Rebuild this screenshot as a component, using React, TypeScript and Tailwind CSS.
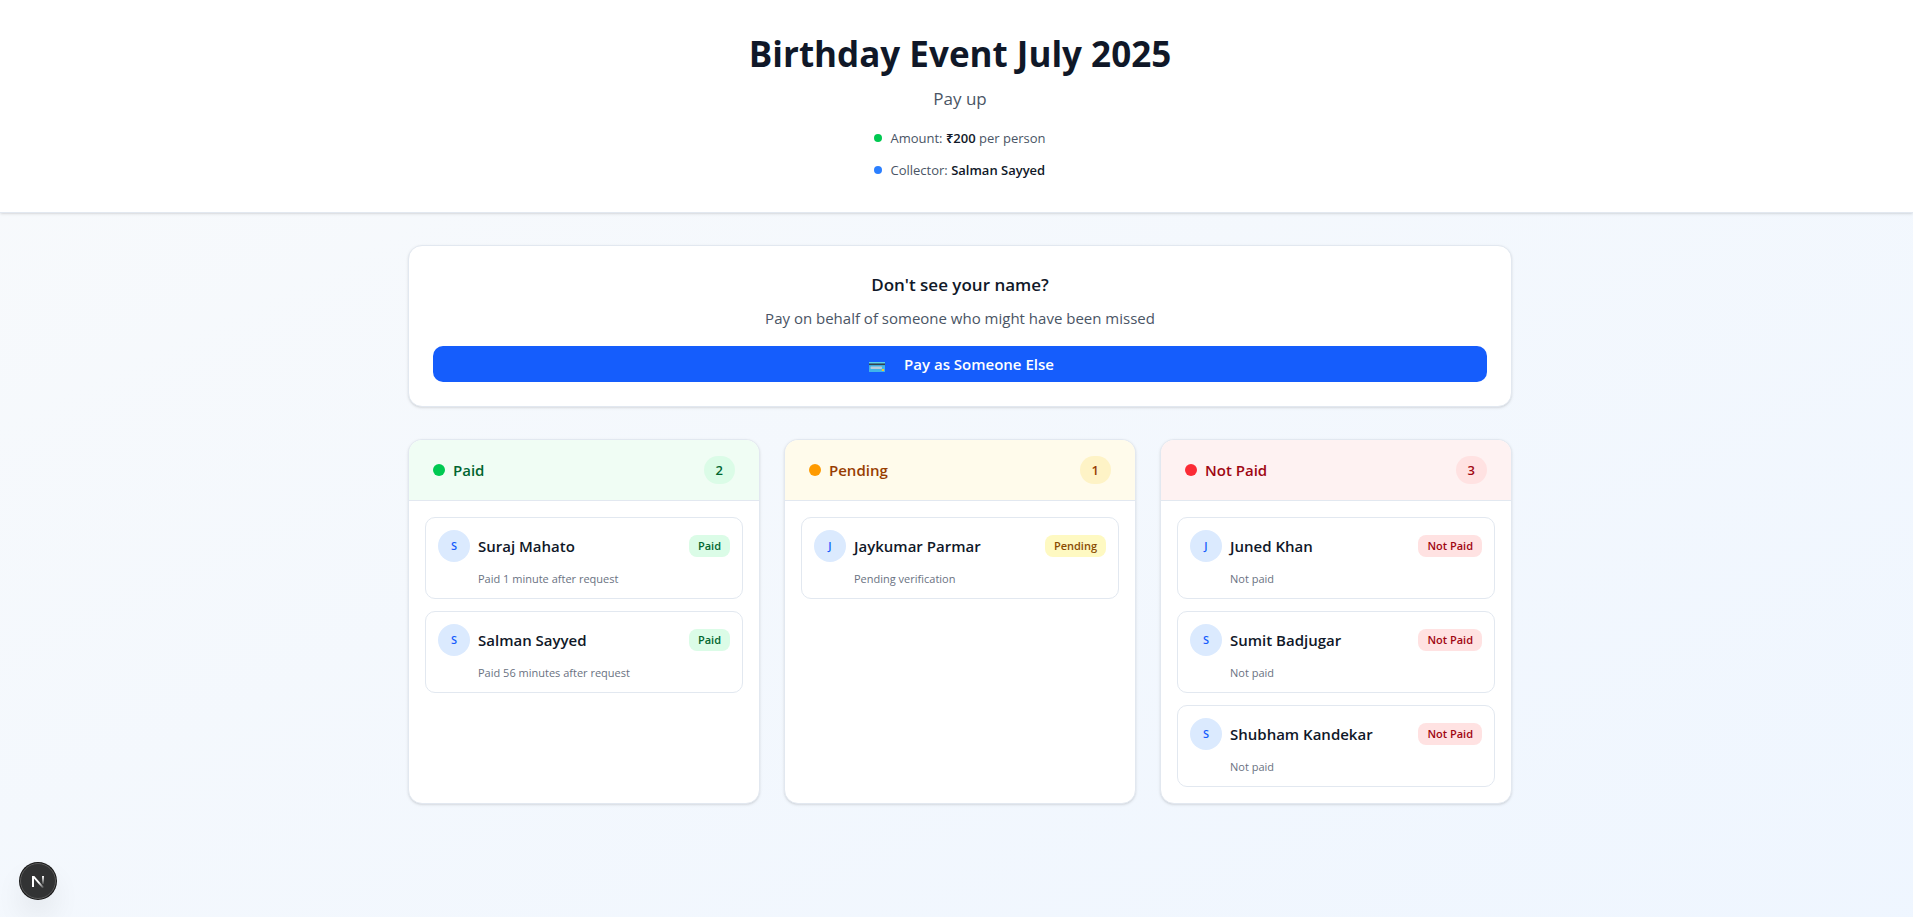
import React from "react";

type Person = { name: string; note: string };

type Column = {
  title: string;
  people: Person[];
  header: string;
  dot: string;
  label: string;
  count: string;
  badge: string;
};

const columns: Column[] = [
  {
    title: "Paid",
    people: [
      { name: "Suraj Mahato", note: "Paid 1 minute after request" },
      { name: "Salman Sayyed", note: "Paid 56 minutes after request" },
    ],
    header: "bg-green-50",
    dot: "bg-green-500",
    label: "text-green-800",
    count: "bg-green-100 text-green-800",
    badge: "bg-green-100 text-green-800",
  },
  {
    title: "Pending",
    people: [{ name: "Jaykumar Parmar", note: "Pending verification" }],
    header: "bg-amber-50",
    dot: "bg-amber-500",
    label: "text-amber-800",
    count: "bg-amber-100 text-amber-800",
    badge: "bg-yellow-100 text-yellow-800",
  },
  {
    title: "Not Paid",
    people: [
      { name: "Juned Khan", note: "Not paid" },
      { name: "Sumit Badjugar", note: "Not paid" },
      { name: "Shubham Kandekar", note: "Not paid" },
    ],
    header: "bg-red-50",
    dot: "bg-red-500",
    label: "text-red-800",
    count: "bg-red-100 text-red-800",
    badge: "bg-red-100 text-red-800",
  },
];

function CardIcon() {
  return (
    <svg width="22" height="16" viewBox="0 0 22 16" aria-hidden="true">
      <rect x="3" y="6" width="16" height="10" rx="0.5" fill="#3fb5ea" />
      <rect x="3" y="6" width="16" height="1.4" fill="#5fd0e4" />
      <rect x="3" y="7.5" width="16" height="1.6" fill="#35424f" />
      <rect x="4.5" y="10.6" width="11.5" height="2.4" rx="0.8" fill="#b9cbdc" />
      <rect x="15.8" y="13" width="2.2" height="2" fill="#f5c02c" />
    </svg>
  );
}

function PersonCard({ person, column }: { person: Person; column: Column }) {
  return (
    <li className="rounded-[10px] border border-slate-200 bg-white px-3 pt-3 pb-[11px]">
      <div className="flex items-center justify-between">
        <div className="flex items-center gap-2">
          <span className="flex size-8 items-center justify-center rounded-full bg-blue-100 text-[11px] leading-4 font-semibold text-blue-600">
            {person.name[0]}
          </span>
          <span className="text-[15px] leading-6 font-semibold text-gray-900">{person.name}</span>
        </div>
        <span
          className={`rounded-lg border border-transparent px-2 py-0.5 text-[11px] leading-4 font-semibold ${column.badge}`}
        >
          {column.title}
        </span>
      </div>
      <p className="mt-[9px] ml-10 text-[11px] leading-4 text-gray-500">{person.note}</p>
    </li>
  );
}

function StatusColumn({ column }: { column: Column }) {
  return (
    <section className="overflow-hidden rounded-[14px] border border-slate-200 bg-white shadow-sm">
      <div className={`flex items-center justify-between border-b border-slate-200 px-6 py-4 ${column.header}`}>
        <h3 className={`flex items-center gap-2 text-[15px] leading-6 font-semibold ${column.label}`}>
          <span className={`size-3 rounded-full ${column.dot}`} />
          {column.title}
        </h3>
        <span className={`rounded-full px-3 py-1 text-[13px] leading-5 font-semibold ${column.count}`}>
          {column.people.length}
        </span>
      </div>
      <ul className="flex flex-col gap-3 p-4">
        {column.people.map((person) => (
          <PersonCard key={person.name} person={person} column={column} />
        ))}
      </ul>
    </section>
  );
}

export default function App() {
  return (
    <div className="min-h-screen bg-linear-to-br from-slate-50 to-blue-50 font-['Segoe_UI','Open_Sans','Noto_Sans',sans-serif]">
      <header className="border-b border-slate-200 bg-white pt-[34px] pb-8 pl-[7px] shadow-sm">
        <div className="flex flex-col items-center">
          <h1 className="text-[35px] leading-10 font-bold text-gray-900">Birthday Event July 2025</h1>
          <p className="mt-[11px] text-[17px] leading-7 text-gray-600">Pay up</p>
          <div className="mt-[15px] flex flex-col gap-3 text-[13px] leading-5 text-gray-600">
            <div className="flex items-center gap-2">
              <span className="size-2 rounded-full bg-green-500" />
              <span>
                Amount: <strong className="font-semibold text-gray-900">₹200</strong> per person
              </span>
            </div>
            <div className="flex items-center gap-2">
              <span className="size-2 rounded-full bg-blue-500" />
              <span>
                Collector: <strong className="font-semibold text-gray-900">Salman Sayyed</strong>
              </span>
            </div>
          </div>
        </div>
      </header>

      <main className="py-8 pl-[7px]">
        <div className="mx-auto max-w-6xl px-6">
          <section className="rounded-[14px] border border-slate-200 bg-white px-6 pt-[25px] pb-6 text-center shadow-sm">
            <h2 className="text-[17px] leading-7 font-semibold text-gray-900">Don't see your name?</h2>
            <p className="mt-[7px] text-[15px] leading-6 text-gray-600">
              Pay on behalf of someone who might have been missed
            </p>
            <button
              type="button"
              className="mt-4 flex h-9 w-full items-center justify-center gap-4 rounded-[10px] bg-blue-600 text-[15px] leading-6 font-semibold text-white"
            >
              <CardIcon />
              Pay as Someone Else
            </button>
          </section>

          <div className="mt-8 grid grid-cols-3 gap-6">
            {columns.map((column) => (
              <StatusColumn key={column.title} column={column} />
            ))}
          </div>
        </div>
      </main>

      <button
        type="button"
        aria-label="Open developer tools"
        className="fixed bottom-[18px] left-5 flex size-9 items-center justify-center rounded-full border border-[#5a5a5a] bg-[#323334] shadow-[0_0_0_1px_#171717,0_16px_32px_-8px_rgba(0,0,0,0.24)]"
      >
        <svg width="14" height="14" viewBox="0 0 14 14" fill="none" aria-hidden="true">
          <defs>
            <linearGradient id="stem" x1="11" y1="2" x2="11" y2="11" gradientUnits="userSpaceOnUse">
              <stop stopColor="#fff" />
              <stop offset="1" stopColor="#fff" stopOpacity="0" />
            </linearGradient>
            <linearGradient id="diagonal" x1="8" y1="8.5" x2="12.4" y2="14" gradientUnits="userSpaceOnUse">
              <stop stopColor="#fff" />
              <stop offset="1" stopColor="#fff" stopOpacity="0.1" />
            </linearGradient>
          </defs>
          <path d="M1 2h2.3l9.7 11.2-1.6 1L1.6 3z" fill="url(#diagonal)" />
          <path d="M2 2v11" stroke="#fff" strokeWidth="2" />
          <path d="M12 2v8" stroke="url(#stem)" strokeWidth="2" />
        </svg>
      </button>
    </div>
  );
}
